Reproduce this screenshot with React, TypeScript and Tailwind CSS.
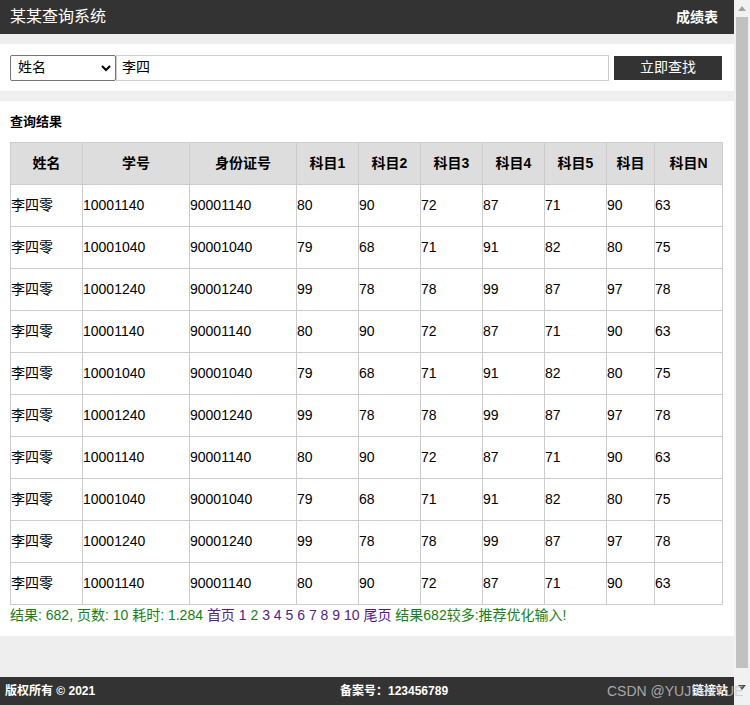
import React from "react";

const headers = ["姓名", "学号", "身份证号", "科目1", "科目2", "科目3", "科目4", "科目5", "科目", "科目N"];
const widths = ["w-[72px]", "w-[107px]", "w-[107px]", "w-[62px]", "w-[62px]", "w-[62px]", "w-[62px]", "w-[62px]", "w-[48px]", "w-[68px]"];

const base = [
  ["李四零", "10001140", "90001140", "80", "90", "72", "87", "71", "90", "63"],
  ["李四零", "10001040", "90001040", "79", "68", "71", "91", "82", "80", "75"],
  ["李四零", "10001240", "90001240", "99", "78", "78", "99", "87", "97", "78"],
];
const rows = Array.from({ length: 10 }, (_, i) => base[i % 3]);

const font = "font-['Liberation_Sans','Noto_Sans_CJK_SC',sans-serif]";

const Pager: React.FC = () => {
  const pages = ["1", "2", "3", "4", "5", "6", "7", "8", "9", "10"];
  return (
    <p className="text-[14px] leading-[20px] text-[#198019] mt-[0px] whitespace-nowrap">
      结果: 682, 页数: 10 耗时: 1.284{" "}
      <span className="text-[#551a8b]">首页</span>{" "}
      {pages.map((p) => (
        <React.Fragment key={p}>
          <span className={p === "2" ? "text-[#198019]" : "text-[#551a8b]"}>{p}</span>{" "}
        </React.Fragment>
      ))}
      <span className="text-[#551a8b]">尾页</span> 结果682较多:推荐优化输入!
    </p>
  );
};

const Scrollbar: React.FC = () => (
  <div className="w-[16px] h-full bg-[#f1f1f1] flex flex-col items-center">
    <div className="h-[17px] flex items-center justify-center">
      <svg width="8" height="5" viewBox="0 0 8 5">
        <path d="M0 5 L4 0 L8 5 Z" fill="#a3a3a3" />
      </svg>
    </div>
    <div className="flex-1 w-[12px] bg-[#c1c1c1] mb-[2px]" />
    <div className="h-[35px] flex items-center justify-center">
      <svg width="8" height="5" viewBox="0 0 8 5">
        <path d="M0 0 L8 0 L4 5 Z" fill="#505050" />
      </svg>
    </div>
  </div>
);

export default function App() {
  return (
    <div className={`flex w-[750px] h-[705px] overflow-hidden bg-[#eeeeee] ${font}`}>
      <div className="w-[734px] h-full flex flex-col relative">
        <header className="h-[34px] bg-[#333333] flex items-center justify-between px-[10px] shrink-0">
          <span className="text-white text-[16px]">某某查询系统</span>
          <span className="text-white text-[14px] font-bold pr-[6px]">成绩表</span>
        </header>
        <div className="h-[10px] shrink-0" />
        <div className="h-[47px] bg-white flex items-center pl-[10px] pr-[11px] shrink-0">
          <div className="w-[106px] h-[26px] border border-[#767676] rounded-[2px] flex items-center justify-between pl-[7px] pr-[4px] text-[14px] text-black">
            <span>姓名</span>
            <svg width="10" height="8" viewBox="0 0 10 8">
              <path d="M1 2 L5 6 L9 2" fill="none" stroke="#000" strokeWidth="2" />
            </svg>
          </div>
          <div className="w-[493px] h-[26px] border border-[#cccccc] flex items-center pl-[5px] text-[14px] text-black">
            李四
          </div>
          <div className="ml-[5px] w-[108px] h-[24px] bg-[#333333] text-white text-[14px] flex items-center justify-center">
            立即查找
          </div>
        </div>
        <div className="h-[10px] shrink-0" />
        <section className="h-[535px] bg-white pl-[10px] pr-[12px] shrink-0">
          <h2 className="text-[13px] font-bold text-black pt-[13px] leading-[16px] h-[41px]">查询结果</h2>
          <table className="border-collapse w-[712px] table-fixed text-[14px] text-black">
            <thead>
              <tr className="h-[42px] bg-[#dddddd]">
                {headers.map((h, i) => (
                  <th key={h} className={`${widths[i]} border border-[#cccccc] font-bold text-center p-0`}>
                    {h}
                  </th>
                ))}
              </tr>
            </thead>
            <tbody>
              {rows.map((r, ri) => (
                <tr key={ri} className="h-[42px]">
                  {r.map((c, ci) => (
                    <td key={ci} className="border border-[#cccccc] text-left px-0 py-0">
                      {c}
                    </td>
                  ))}
                </tr>
              ))}
            </tbody>
          </table>
          <Pager />
        </section>
        <div className="flex-1" />
        <footer className="h-[28px] bg-[#333333] flex items-center px-[5px] text-white text-[12px] font-bold shrink-0 relative">
          <span className="w-[300px]">版权所有 © 2021</span>
          <span className="ml-[35px]">备案号：123456789</span>
          <span className="ml-auto mr-[1px]">链接站</span>
          <span className="absolute left-[607px] top-[4px] text-[14px] font-normal text-[#c8c8c8]/80 whitespace-nowrap">
            CSDN @YUJIANYUE
          </span>
        </footer>
      </div>
      <Scrollbar />
    </div>
  );
}
